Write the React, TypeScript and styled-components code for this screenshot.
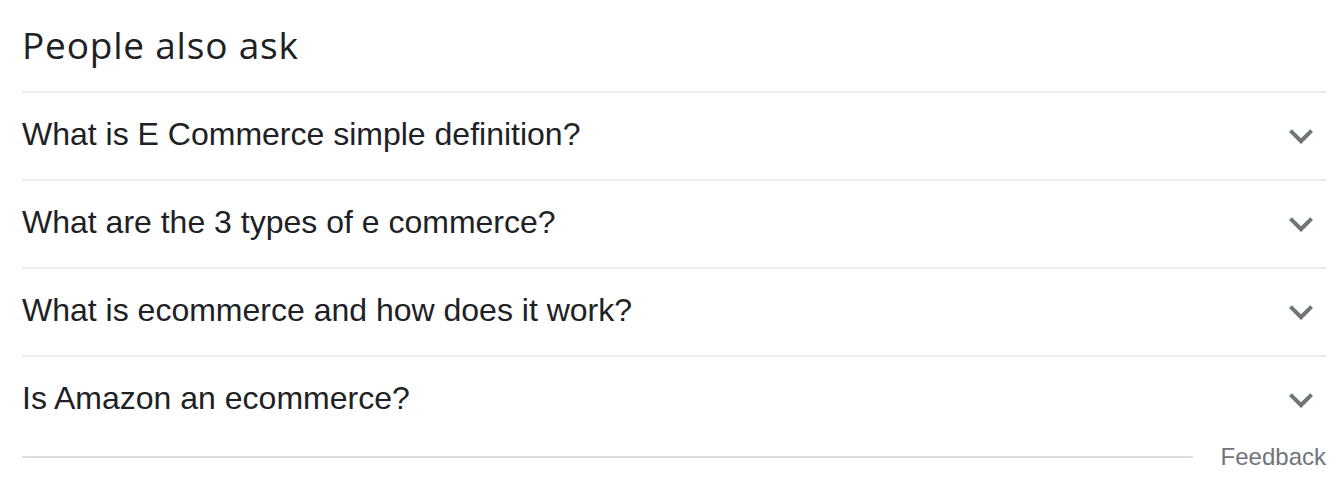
import React from "react";
import styled, { createGlobalStyle } from "styled-components";

const Global = createGlobalStyle`
  html, body { margin: 0; padding: 0; background: #fff; }
  body { font-family: "Liberation Sans", Arial, sans-serif; }
`;

const Wrapper = styled.div`
  width: 1304px;
  padding-left: 22px;
  box-sizing: content-box;
`;

const Title = styled.h2`
  margin: 0;
  height: 91px;
  box-sizing: border-box;
  padding-top: 21px;
  font-family: "Open Sans", Roboto, sans-serif;
  font-weight: 400;
  font-size: 37px;
  line-height: 48px;
  color: #202124;
  letter-spacing: 0.8px;
`;

const Row = styled.div`
  display: flex;
  align-items: center;
  justify-content: space-between;
  height: 88px;
  box-sizing: border-box;
  border-top: 2px solid #ebebeb;
  cursor: pointer;
`;

const Question = styled.span`
  font-family: "Liberation Sans", Arial, sans-serif;
  font-size: 32px;
  line-height: 44px;
  color: #202124;
  padding-bottom: 4px;
`;

const Chevron = styled.svg`
  width: 48px;
  height: 48px;
  fill: #70757a;
  margin-right: 1px;
  flex-shrink: 0;
`;

const Footer = styled.div`
  display: flex;
  align-items: center;
  gap: 28px;
  height: 28px;
`;

const Rule = styled.div`
  flex: 1;
  height: 2px;
  background: #dadce0;
`;

const FeedbackLink = styled.span`
  font-family: "Liberation Sans", Arial, sans-serif;
  font-size: 24px;
  line-height: 28px;
  color: #70757a;
  margin-bottom: 1px;
`;

const questions = [
  "What is E Commerce simple definition?",
  "What are the 3 types of e commerce?",
  "What is ecommerce and how does it work?",
  "Is Amazon an ecommerce?",
];

export default function App() {
  return (
    <>
      <Global />
      <Wrapper>
        <Title>People also ask</Title>
        {questions.map((q) => (
          <Row key={q}>
            <Question>{q}</Question>
            <Chevron viewBox="0 0 24 24">
              <path d="M16.59 8.59L12 13.17 7.41 8.59 6 10l6 6 6-6z" />
            </Chevron>
          </Row>
        ))}
        <Footer>
          <Rule />
          <FeedbackLink>Feedback</FeedbackLink>
        </Footer>
      </Wrapper>
    </>
  );
}
